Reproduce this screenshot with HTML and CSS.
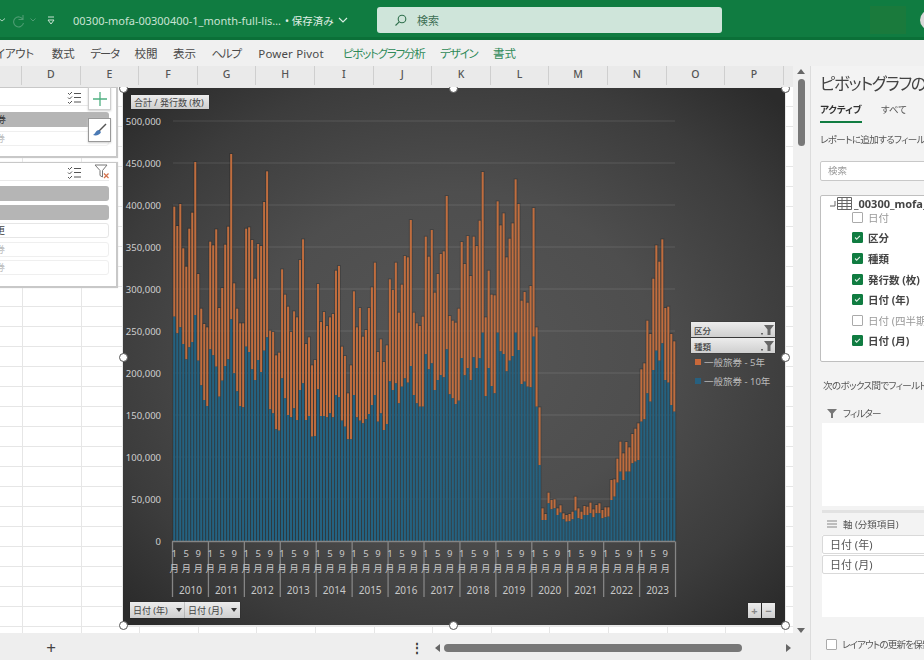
FILE: index.html
```html
<!DOCTYPE html>
<html lang="ja">
<head>
<meta charset="utf-8">
<title>00300-mofa-00300400-1_month-full-list</title>
<link rel="stylesheet" href="styles.css">
</head>
<body>
<div class="app">
  <header class="titlebar">
    <svg class="qa-chevron-cut" width="6" height="6" viewBox="0 0 6 6"><path d="M-1 1.5 2 4 5 1.5" fill="none" stroke="#a9d3bb"/></svg>
    <svg class="qa-redo" width="16" height="16" viewBox="0 0 16 16"><path d="M12 3v4.5H7.5M12 7.5A5 5 0 1 0 12.5 11" fill="none" stroke="#4d9c72" stroke-width="1.1"/></svg>
    <svg class="qa-chevron" width="6" height="6" viewBox="0 0 6 6"><path d="M.5 1.5 3 4 5.500 1.500" fill="none" stroke="#4d9c72"/></svg>
    <svg class="qa-more" width="8" height="9" viewBox="0 0 8 9"><path d="M1 1h6M1 4h6L4 8Z" fill="none" stroke="#c9e3d3"/></svg>
    <span class="doc-name">00300-mofa-00300400-1_month-full-lis…</span>
    <span class="doc-state">• 保存済み</span>
    <svg class="doc-chevron" width="10" height="6" viewBox="0 0 10 6"><path d="M1 1 5 5 9 1" fill="none" stroke="#dcefe4" stroke-width="1.1"/></svg>
    <div class="search">
      <svg width="13" height="13" viewBox="0 0 13 13"><circle cx="8" cy="5" r="3.800" fill="none" stroke="#2f6f4c" stroke-width="1.1"/><path d="M5.200 7.800 1.500 11.500" stroke="#2f6f4c" stroke-width="1.1"/></svg>
      <span>検索</span>
    </div>
    <div class="account-block"></div>
    <div class="avatar"></div>
  </header>

  <nav class="ribbon">
    <span class="tab tab-cut">ページレイアウト</span>
    <span class="tab">数式</span>
    <span class="tab tab-kana">データ</span>
    <span class="tab">校閲</span>
    <span class="tab">表示</span>
    <span class="tab tab-kana">ヘルプ</span>
    <span class="tab tab-latin">Power Pivot</span>
    <span class="tab tab-green tab-kana">ピボットグラフ分析</span>
    <span class="tab tab-green tab-kana">デザイン</span>
    <span class="tab tab-green">書式</span>
  </nav>

  <div class="body">
    <div class="workspace">
      <div class="sheet-row">
        <div class="sheet">
          <div class="col-heads">
            <span class="col-stub"></span>
            <span class="col">D</span><span class="col">E</span><span class="col">F</span><span class="col">G</span>
            <span class="col">H</span><span class="col">I</span><span class="col">J</span><span class="col">K</span>
            <span class="col">L</span><span class="col">M</span><span class="col">N</span><span class="col">O</span><span class="col">P</span>
          </div>
          <div class="cells">
            <section class="slicer slicer-a">
              <div class="slicer-head">
                <svg class="multi" width="15" height="13" viewBox="0 0 15 13"><path d="M1 2 2.500 3.500 5 1M1 6.500 2.500 8 5 5.500M1 11 2.500 12.500 5 10M7 2.500h7M7 6.500h7M7 11h7" fill="none" stroke="#555" stroke-width="1"/></svg>
              </div>
              <div class="item item-on">一般旅券</div>
              <div class="item item-off">公用旅券</div>
            </section>
            <section class="slicer slicer-b">
              <div class="slicer-head">
                <svg class="multi" width="15" height="13" viewBox="0 0 15 13"><path d="M1 2 2.500 3.500 5 1M1 6.500 2.500 8 5 5.500M1 11 2.500 12.500 5 10M7 2.500h7M7 6.500h7M7 11h7" fill="none" stroke="#555" stroke-width="1"/></svg>
                <svg class="clear" width="16" height="15" viewBox="0 0 16 15"><path d="M1 1h12L8.500 6.500V13L6 11.500V6.500Z" fill="#fff" stroke="#777"/><path d="M10 9.500l4.500 4.500M14.500 9.500 10 14" stroke="#d4704a" stroke-width="1.200"/></svg>
              </div>
              <div class="item item-on">　</div>
              <div class="item item-on">　</div>
              <div class="item item-white">記載事項変更</div>
              <div class="item item-off">公用旅券</div>
              <div class="item item-off">一般旅券</div>
            </section>
            <button class="float-btn float-add" aria-label="追加">
              <svg width="14" height="14" viewBox="0 0 14 14"><path d="M7 0v14M0 7h14" stroke="#4fb081" stroke-width="1.300"/></svg>
            </button>
            <button class="float-btn float-brush" aria-label="スタイル">
              <svg width="15" height="15" viewBox="0 0 15 15"><path d="M14 1 7 8" stroke="#555" stroke-width="1.400"/><path d="M7 7c-3 0-3 3-6 5 3 1 7 0 8-3Z" fill="#4b7ab5"/></svg>
            </button>

            <figure class="chart">
              <svg id="plot" class="plot" viewBox="123 88 662 537" width="662" height="537"></svg>
              <div class="chip chip-title">合計 / 発行数 (枚)</div>
              <div class="axis-chips">
                <div class="chip chip-axis">日付 (年)<i class="caret"></i></div>
                <div class="chip chip-axis">日付 (月)<i class="caret"></i></div>
              </div>
              <div class="zoom-chips">
                <div class="chip chip-zoom">+</div>
                <div class="chip chip-zoom">−</div>
              </div>
              <div class="legend">
                <div class="chip chip-legend">区分<svg width="13" height="10" viewBox="0 0 13 10"><path d="M0 8h2v1.500H0ZM3 0h10L9.500 4.500V10H6.500V4.500Z" fill="#666"/></svg></div>
                <div class="chip chip-legend">種類<svg width="13" height="10" viewBox="0 0 13 10"><path d="M0 8h2v1.500H0ZM3 0h10L9.500 4.500V10H6.500V4.500Z" fill="#666"/></svg></div>
                <div class="legend-row"><i class="swatch swatch-five"></i>一般旅券 - 5年</div>
                <div class="legend-row"><i class="swatch swatch-ten"></i>一般旅券 - 10年</div>
              </div>
              <i class="handle h-tl"></i><i class="handle h-tc"></i><i class="handle h-tr"></i>
              <i class="handle h-ml"></i><i class="handle h-mr"></i>
              <i class="handle h-bl"></i><i class="handle h-bc"></i><i class="handle h-br"></i>
            </figure>
          </div>
        </div>
        <div class="vscroll">
          <i class="arrow-up"></i>
          <i class="v-thumb"></i>
          <i class="arrow-down"></i>
        </div>
      </div>
      <footer class="sheetbar">
        <span class="plus">+</span>
        <span class="dots">⋮</span>
        <div class="hscroll">
          <i class="arrow-left"></i>
          <i class="h-thumb"></i>
          <i class="arrow-right"></i>
        </div>
      </footer>
    </div>

    <aside class="pane">
      <h2 class="pane-title">ピボットグラフのフィールド</h2>
      <div class="pane-tabs">
        <span class="pane-tab pane-tab-on">アクティブ</span>
        <span class="pane-tab">すべて</span>
      </div>
      <p class="pane-note">レポートに追加するフィールドを選択してください</p>
      <div class="pane-search">検索</div>
      <div class="fields">
        <div class="field-root">
          <svg class="tree" width="8" height="8" viewBox="0 0 8 8"><path d="M7 1v5H2" fill="none" stroke="#666"/></svg>
          <svg class="table-icon" width="15" height="13" viewBox="0 0 15 13"><path d="M.5.500h14v12H.500ZM.500 3.500h14M.500 6.500h14M.500 9.500h14M5 .500v12M10 .500v12" fill="none" stroke="#666"/></svg>
          <b>_00300_mofa_00300400</b>
        </div>
        <label class="field"><i class="cb"></i>日付</label>
        <label class="field field-on"><i class="cb cb-on"></i>区分</label>
        <label class="field field-on"><i class="cb cb-on"></i>種類</label>
        <label class="field field-on"><i class="cb cb-on"></i>発行数 (枚)</label>
        <label class="field field-on"><i class="cb cb-on"></i>日付 (年)</label>
        <label class="field"><i class="cb"></i>日付 (四半期)</label>
        <label class="field field-on"><i class="cb cb-on"></i>日付 (月)</label>
      </div>
      <p class="pane-note pane-note-2">次のボックス間でフィールドをドラッグしてください</p>
      <div class="area-head">
        <svg width="10" height="10" viewBox="0 0 10 10"><path d="M0 1h10L6 5.500V10H4V5.500Z" fill="#777"/></svg>
        <span class="kana">フィルター</span>
      </div>
      <div class="area area-filter"></div>
      <div class="divider"></div>
      <div class="area-head area-head-axis">
        <svg width="10" height="8" viewBox="0 0 10 8"><path d="M0 1h10M0 4h10M0 7h10" stroke="#888" stroke-width="1.200"/></svg>
        <span>軸 (分類項目)</span>
      </div>
      <div class="area area-axis">
        <div class="pill">日付 (年)</div>
        <div class="pill">日付 (月)</div>
      </div>
      <label class="defer"><i class="cb"></i>レイアウトの更新を保留する</label>
    </aside>
  </div>
</div>
<script src="chart.js"></script>
</body>
</html>
```
FILE: styles.css
```css
* { box-sizing: border-box; }
html, body { margin: 0; padding: 0; background: #f0f0f0; }
body { width: 924px; height: 660px; overflow: hidden; }
.app {
  width: 924px; height: 660px; display: flex; flex-direction: column; overflow: hidden;
  font-family: "Noto Sans", "Noto Sans CJK JP", sans-serif; color: #444;
  font-feature-settings: "palt"; filter: blur(.4px);
}

/* title bar */
.titlebar {
  height: 40px; flex: none; display: flex; align-items: center; background: #107c41;
  border-bottom: 3px solid #0b7038; padding-top: 3px; color: #d5e9dd; overflow: hidden;
}
.titlebar > * { flex: none; }
.qa-redo { margin-left: 5px; }
.qa-chevron { margin-left: 3px; }
.qa-more { margin-left: 11px; }
.doc-name { margin-left: 18px; font-size: 11px; width: 205px; white-space: nowrap; color: #c9e3d3; }
.doc-state { margin-left: 7px; font-size: 10.500px; width: 49px; color: #e0f0e7; white-space: nowrap; }
.doc-chevron { margin-left: 4px; }
.search {
  margin-left: 29px; width: 345px; height: 26px; background: #cfe5da; border-radius: 3px;
  display: flex; align-items: center; padding-left: 17px; gap: 10px; font-size: 11px; color: #3d6f55;
}
.account-block { margin-left: 148px; width: 36px; height: 28px; background: #1a7a3c; }
.avatar { margin-left: 14px; width: 20px; height: 20px; border-radius: 50%; background: #d9d9d9; }

/* ribbon tabs */
.ribbon {
  height: 26px; flex: none; display: flex; align-items: center; gap: 15.500px; background: #f0f0f0;
  overflow: hidden; font-size: 11.500px; color: #4a4a4a; white-space: nowrap;
}
.tab-cut { margin-left: -48px; margin-right: 2.500px; letter-spacing: -.3px; }
.tab-kana { letter-spacing: -1.200px; }
.tab-latin { margin-left: 2px; margin-right: 4px; width: 65px; letter-spacing: .15px; }
.tab-green { color: #2f8a58; }

/* layout */
.body { flex: 1; display: flex; min-height: 0; }
.workspace { width: 810px; flex: none; display: flex; flex-direction: column; }
.sheet-row { flex: 1; display: flex; min-height: 0; }
.sheet { width: 793px; flex: none; display: flex; flex-direction: column; }

/* column heads */
.col-heads {
  height: 21px; flex: none; display: flex; background: #eaeaea; overflow: hidden;
  font-size: 10.500px; color: #555; font-weight: 500;
}
.col-stub { width: 22px; flex: none; border-right: 1px solid #cfcfcf; margin-bottom: 2px; }
.col { width: 58.600px; flex: none; text-align: center; line-height: 17px; border-right: 1px solid #cfcfcf; margin-bottom: 2px; }

/* worksheet */
.cells {
  position: relative; flex: 1; overflow: hidden;
  background-color: #fff;
  background-image:
    repeating-linear-gradient(to right, #e6e6e6 0 1px, transparent 1px 58.600px),
    repeating-linear-gradient(to bottom, transparent 0 19px, #e6e6e6 19px 20px);
  background-position: 22px 0, 0 0;
}

/* slicers */
.slicer {
  position: absolute; left: -10px; width: 128px; background: #fff; border: 1px solid #c8c8c8;
  border-right-width: 2px; border-bottom-width: 2px; box-shadow: 0 0 1px #ddd;
}
.slicer-a { top: 0; height: 71px; }
.slicer-b { top: 75px; height: 126px; }
.slicer-head { position: relative; height: 18px; margin-right: 7px; border-bottom: 1px solid #e8e8e8; }
.slicer-a .slicer-head { height: 18px; margin-bottom: 6px; }
.slicer-b .slicer-head { height: 18px; margin-bottom: 5px; }
.multi { position: absolute; left: 76px; top: 3px; }
.clear { position: absolute; left: 103px; top: 1px; }
.item {
  height: 15px; margin: 0 7px 3.500px 0; border-radius: 3px; font-size: 9.500px; line-height: 15px;
  padding-right: 103px; white-space: nowrap; overflow: hidden; direction: rtl; text-align: right;
}
.item-on { background: #b5b5b5; color: #333; border: 0; }
.item-white { background: #fff; border: 1px solid #e6e6e6; color: #444; line-height: 13px; }
.item-off { background: #fff; border: 1px solid #efefef; color: #bbb; line-height: 13px; }
.float-btn {
  position: absolute; left: 88px; width: 23px; padding: 0; background: #fff; border: 1px solid #cfcfcf;
  display: flex; align-items: center; justify-content: center; box-shadow: 0 1px 2px #ccc;
}
.float-add { top: 0; height: 23px; }
.float-brush { top: 31px; height: 24px; border-color: #999; }

/* chart */
.chart {
  position: absolute; left: 123px; top: 1px; width: 662px; height: 537px; margin: 0;
  background: radial-gradient(ellipse 68% 68% at 50% 50%, #565656 0%, #4e4e4e 45%, #3c3c3c 78%, #2b2b2b 100%);
  outline: 1.500px solid #e9e9e9; box-shadow: 1px 1px 0 #888;
}
.plot { display: block; font-family: "Noto Sans", "Noto Sans CJK JP", sans-serif; }
.grid-line { stroke: #fff; stroke-opacity: .08; stroke-width: 1.400; }
.tick-val { fill: #cfcfcf; font-size: 9.500px; text-anchor: end; }
.axis-line { stroke: #858585; stroke-width: 1.300; }
.tick-month, .tick-year { fill: #c8c8c8; text-anchor: middle; }
.tick-month { font-size: 9.500px; }
.tick-year { font-size: 10px; }
.bar-back { fill: #000; fill-opacity: .16; }
.bar-five { fill: #c06d3e; }
.bar-ten { fill: #246281; }

.chip {
  background: linear-gradient(#ececec, #cfcfcf); color: #444; font-size: 9px; white-space: nowrap;
  display: flex; align-items: center; box-shadow: 0 0 1px #222;
}
.chip-title { position: absolute; left: 8px; top: 7px; height: 14px; width: 78px; padding-left: 3px; }
.axis-chips { position: absolute; left: 7px; top: 514px; display: flex; }
.chip-axis { width: 55px; height: 16px; padding-left: 3px; font-size: 9px; position: relative; }
.caret {
  position: absolute; right: 3px; top: 6px; border: 3.500px solid transparent; border-top: 4px solid #333; border-bottom: 0;
}
.zoom-chips { position: absolute; left: 625px; top: 515px; display: flex; gap: 1px; }
.chip-zoom { width: 13px; height: 15px; justify-content: center; font-size: 11px; font-weight: 700; color: #888; }
.legend { position: absolute; left: 568px; top: 234px; width: 84px; }
.chip-legend {
  height: 15px; margin-bottom: 1px; padding: 0 1px 0 3px; justify-content: space-between;
  font-size: 8.500px; font-weight: 500;
}
.legend-row { display: flex; align-items: center; height: 19.500px; color: #b9b9b9; font-size: 9.500px; white-space: nowrap; gap: 3px; padding-left: 4px; }
.chip-legend + .legend-row { margin-top: -2px; }
.swatch { width: 6px; height: 6px; flex: none; }
.swatch-five { background: #c8683a; }
.swatch-ten { background: #27607f; }
.handle {
  position: absolute; width: 9px; height: 9px; margin: -4.500px 0 0 -4.500px; border-radius: 50%;
  background: #fff; border: 1.500px solid #555;
}
.h-tl { left: 0; top: 0; } .h-tc { left: 330px; top: 0; } .h-tr { left: 662px; top: 0; }
.h-ml { left: 0; top: 269px; } .h-mr { left: 662px; top: 269px; }
.h-bl { left: 0; top: 537px; } .h-bc { left: 330px; top: 537px; } .h-br { left: 662px; top: 537px; }

/* scrollbars */
.vscroll { position: relative; flex: 1; background: #f0f0f0; }
.arrow-up, .arrow-down, .arrow-left, .arrow-right { position: absolute; width: 0; height: 0; border: 4px solid transparent; }
.arrow-up { left: 4px; top: 3px; border-bottom: 5px solid #666; border-top: 0; }
.arrow-down { left: 4px; top: 562px; border-top: 5px solid #666; border-bottom: 0; }
.v-thumb { position: absolute; left: 5px; top: 13px; width: 7px; height: 67px; border-radius: 4px; background: #787878; }
.sheetbar { height: 27px; flex: none; display: flex; align-items: center; background: #eeeeee; position: relative; padding-top: 2px; }
.plus { margin-left: 44px; width: 14px; text-align: center; font-size: 17px; line-height: 17px; color: #444; }
.dots { margin-left: 352px; font-size: 12px; font-weight: 700; color: #333; width: 14px; text-align: center; }
.hscroll { position: relative; margin-left: 7px; width: 365px; height: 20px; flex: none; }
.arrow-left { left: 4px; top: 6px; border-right: 5px solid #666; border-left: 0; }
.arrow-right { right: 5px; top: 6px; border-left: 5px solid #666; border-right: 0; }
.h-thumb { position: absolute; left: 13px; top: 6px; width: 298px; height: 8px; border-radius: 4px; background: #777; }

/* task pane */
.pane { flex: 1; min-width: 0; background: #f3f3f3; border-left: 1px solid #dcdcdc; padding: 6px 0 0 9px; overflow: hidden; white-space: nowrap; }
.pane-title { margin: 0; font-size: 16.500px; font-weight: 400; line-height: 24px; color: #444; letter-spacing: -1.300px; }
.pane-tabs { display: flex; gap: 19px; margin-top: 4px; height: 24px; }
.pane-tab { font-size: 9.500px; line-height: 20px; color: #555; border-bottom: 2px solid transparent; height: 23px; }
.pane-tab-on { font-weight: 700; color: #333; border-bottom-color: #107c41; width: 42px; }
.pane-note { margin: 9px 0 0; font-size: 9.500px; line-height: 14px; color: #555; letter-spacing: -.6px; }
.pane-search { margin-top: 14px; height: 20px; width: 140px; background: #fff; border: 1px solid #c8c8c8; border-radius: 2px; font-size: 9.500px; line-height: 18px; padding-left: 7px; color: #999; }
.fields { margin-top: 14px; width: 140px; height: 167px; background: #fff; border: 1px solid #bfbfbf; border-radius: 2px; }
.field-root { display: flex; align-items: center; height: 14px; margin: -1px 0 -2px; padding-left: 7px; gap: 1px; font-size: 11px; color: #444; position: relative; top: 1px; }
.field-root svg { flex: none; }
.field-root b { margin-left: 1px; }
.tree { margin-top: 1px; }
.field { display: flex; align-items: center; height: 20.600px; padding-left: 31px; gap: 5px; font-size: 10.500px; color: #999; }
.field-on { font-weight: 700; color: #444; }
.cb { display: block; width: 11px; height: 11px; flex: none; background: #fff; border: 1px solid #aaa; border-radius: 1px; }
.cb-on {
  border-color: #107c41;
  background: #107c41 url("data:image/svg+xml,%3Csvg xmlns='http://www.w3.org/2000/svg' viewBox='0 0 11 11'%3E%3Cpath d='M2.500 5.500 4.500 7.500 8.500 3.500' fill='none' stroke='%23dff0e6' stroke-width='1.300'/%3E%3C/svg%3E") center/contain no-repeat;
}
.pane-note-2 { margin: 17px 0 0 3px; }
.area-head { display: flex; align-items: center; gap: 6px; margin: 13px 0 0 7px; height: 14px; font-size: 9.500px; color: #555; }
.kana { letter-spacing: -.8px; }
.area { margin: 3px 0 0 2px; width: 140px; background: #fff; }
.area-filter { height: 83px; }
.divider { height: 3px; margin: 4px 0 0 2px; background: #e2e2e2; width: 140px; }
.area-head-axis { margin-top: 4px; }
.area-axis { height: 82px; margin-top: 4px; }
.pill { height: 19px; margin-bottom: 1px; background: #fff; border: 1px solid #d9d9d9; border-radius: 2px; font-size: 11px; line-height: 17px; padding-left: 7px; color: #555; }
.defer { display: flex; align-items: center; gap: 5px; margin: 20px 0 0 6px; font-size: 9.500px; color: #555; letter-spacing: -.8px; }
```
FILE: chart.js
```js
// Pixel readings of the stack tops, by month from January 2010.
const YEARS = 14, X0 = 174.3, STEP = 2.994, BASE = 541, PX_PER_50K = 42;
const fromA = z => 150 + z / 3, fromB = z => 230 + z / 3;

const totals = [
  170,228,162,295,350,236,188,36,372,476,522,532,
  275,286,238,474,414,284,230,12,400,476,520,520,
  236,232,270,386,282,288,156,64,542,546,616,608,
  358,434,470,546,484,502,330,268,582,562,646,630,
  402,516,486,528,502,492,362,348,590,618,730,646,
  424,532,474,560,540,474,412,338,606,568,636,586,
  388,420,338,488,404,318,322,210,488,520,528,500,
  260,320,240,428,372,312,304,138,498,512,518,476,
  276,342,258,378,260,288,212,66,502,362,434,436,
  154,226,190,322,266,220,88,162,452,426,458,408
].map(fromA).concat([
  -66,292,532,835,852,788,810,808,835,826,850,855,
  852,845,800,835,845,828,830,818,838,825,820,840,
  832,832,750,748,686,635,670,636,652,612,596,580,
  418,400,272,312,146,46,95,28,234,230,312,334
].map(fromB));

const tens = [
  500,550,532,582,628,592,576,495,632,706,750,768,
  598,616,650,740,692,648,628,508,670,724,768,772,
  590,606,658,690,630,666,602,562,778,790,838,842,
  685,745,795,802,775,810,720,700,810,798,860,858,
  718,798,798,802,790,802,735,742,812,830,868,868,
  735,802,812,820,808,792,765,735,815,790,840,822,
  694,720,700,760,710,685,698,648,735,760,770,770,
  612,658,640,720,690,675,682,598,733,745,762,752,
  624,676,654,690,622,654,625,548,738,654,708,730,
  548,604,612,664,632,618,548,600,702,695,710,712
].map(fromA).concat([
  320,530,705,870,870,820,838,835,855,848,868,875,
  874,868,842,865,868,855,855,850,862,850,850,865,
  862,860,810,800,758,725,750,725,725,700,695,690,
  575,568,490,515,420,362,392,340,450,458,525,545
].map(fromB));

const svg = document.getElementById('plot');
const NS = 'http://www.w3.org/2000/svg';
function add(tag, attrs, text) {
  const el = document.createElementNS(NS, tag);
  for (const k in attrs) el.setAttribute(k, attrs[k]);
  if (text !== undefined) el.textContent = text;
  svg.appendChild(el);
}

for (let i = 0; i <= 10; i++) {
  const y = BASE - i * PX_PER_50K;
  if (i) add('line', { class: 'grid-line', x1: 173, x2: 675, y1: y, y2: y });
  add('text', { class: 'tick-val', x: 161, y: y + 3.5 }, (i * 50000).toLocaleString('en-US'));
}

totals.forEach((top, i) => {
  const cx = X0 + i * STEP;
  add('rect', { class: 'bar-back', x: cx - 2, y: top - 1, width: 4, height: BASE - top + 1 });
});
totals.forEach((top, i) => {
  const cx = X0 + i * STEP, split = tens[i];
  add('rect', { class: 'bar-five', x: cx - 1, y: top, width: 2, height: split - top });
  add('rect', { class: 'bar-ten', x: cx - 1.1, y: split, width: 2.2, height: BASE - split });
});

add('line', { class: 'axis-line', x1: 172, x2: 675, y1: 541.5, y2: 541.5 });
for (let y = 0; y <= YEARS; y++) {
  const x = 172.5 + y * 35.93;
  add('line', { class: 'axis-line', x1: x, x2: x, y1: 541.5, y2: 597 });
  if (y === YEARS) break;
  add('text', { class: 'tick-year', x: x + 18, y: 594 }, 2010 + y);
  [1, 5, 9].forEach(m => {
    const mx = X0 + (y * 12 + m - 1) * STEP;
    add('text', { class: 'tick-month', x: mx, y: 557 }, m);
    add('text', { class: 'tick-month', x: mx, y: 572 }, '月');
  });
}
```
